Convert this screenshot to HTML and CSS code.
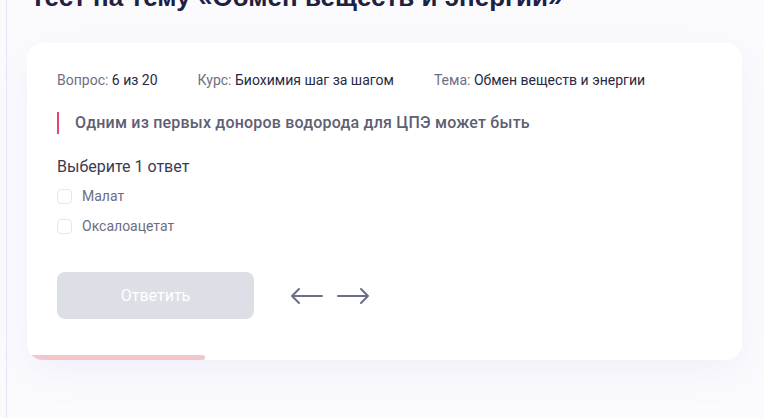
FILE: index.html
```html
<!DOCTYPE html>
<html lang="ru">
<head>
<meta charset="utf-8">
<link rel="stylesheet" href="styles.css">
</head>
<body>
<main class="main">
  <h1 class="title">Тест на тему «Обмен веществ и энергии»</h1>
  <section class="card">
    <div class="meta">
      <span class="meta-item"><span class="meta-label">Вопрос:</span> 6 из 20</span>
      <span class="meta-item"><span class="meta-label">Курс:</span> Биохимия шаг за шагом</span>
      <span class="meta-item"><span class="meta-label">Тема:</span> Обмен веществ и энергии</span>
    </div>
    <div class="question">Одним из первых доноров водорода для ЦПЭ может быть</div>
    <div class="choose">Выберите 1 ответ</div>
    <label class="option first"><span class="box"></span><span>Малат</span></label>
    <label class="option"><span class="box"></span><span>Оксалоацетат</span></label>
    <div class="actions">
      <button class="answer">Ответить</button>
      <div class="arrows">
        <svg width="33" height="18" viewBox="0 0 33 18"><path d="M32 9H2M9 2L2 9l7 7" fill="none" stroke="#6b6e86" stroke-width="2" stroke-linecap="round" stroke-linejoin="round"/></svg>
        <svg width="33" height="18" viewBox="0 0 33 18"><path d="M1 9h30M24 2l7 7-7 7" fill="none" stroke="#6b6e86" stroke-width="2" stroke-linecap="round" stroke-linejoin="round"/></svg>
      </div>
    </div>
    <div class="progress"></div>
  </section>
</main>
</body>
</html>
```
FILE: styles.css
```css
html, body {
  margin: 0;
  padding: 0;
}
body {
  background: #fbfbfe;
  font-family: Roboto, "Noto Sans", sans-serif;
  height: 418px;
  overflow: hidden;
}
.main {
  margin-left: 6px;
  border-left: 1px solid #e7e4f7;
  padding: 0 22px 0 20px;
  height: 436px;
  margin-top: -18px;
}
.title {
  margin: 0;
  padding: 0 0 0 3px;
  font-family: "Liberation Sans", Arial, sans-serif;
  font-weight: 700;
  font-size: 26px;
  line-height: 31px;
  color: #1f2140;
  height: 31px;
  white-space: nowrap;
}
.card {
  position: relative;
  overflow: hidden;
  margin-top: 30px;
  background: #fff;
  border-radius: 16px;
  box-shadow: 0 12px 40px rgba(110, 100, 210, 0.08);
  padding: 28px 30px 0 30px;
  height: 289px;
}
.meta {
  display: flex;
  gap: 40px;
  font-size: 14px;
  line-height: 18px;
  color: #272a42;
}
.meta-label {
  color: #6e7083;
}
.question {
  margin-top: 23px;
  border-left: 2px solid #e2466f;
  padding-left: 16px;
  font-size: 16px;
  font-weight: 500;
  letter-spacing: 0.2px;
  line-height: 22px;
  color: #5e6072;
}
.choose {
  margin-top: 23px;
  font-size: 16px;
  line-height: 20px;
  color: #383b55;
}
.option {
  display: flex;
  align-items: center;
  gap: 10px;
  margin-top: 10px;
  font-size: 14px;
  line-height: 20px;
  color: #6c6e7f;
}
.option.first {
  margin-top: 9px;
}
.box {
  width: 13px;
  height: 13px;
  border: 1px solid #e6e6ec;
  border-radius: 4px;
}
.actions {
  display: flex;
  align-items: center;
  gap: 36px;
  margin-top: 36px;
}
.answer {
  width: 197px;
  height: 47px;
  border: none;
  border-radius: 8px;
  background: #dcdfe5;
  color: #fff;
  font-family: Roboto, "Noto Sans", sans-serif;
  font-size: 16px;
}
.arrows {
  display: flex;
  gap: 14px;
  align-items: center;
}
.progress {
  position: absolute;
  left: 0;
  bottom: 0;
  width: 178px;
  height: 5px;
  background: #f4c6cc;
  border-radius: 0 3px 3px 0;
}
```
